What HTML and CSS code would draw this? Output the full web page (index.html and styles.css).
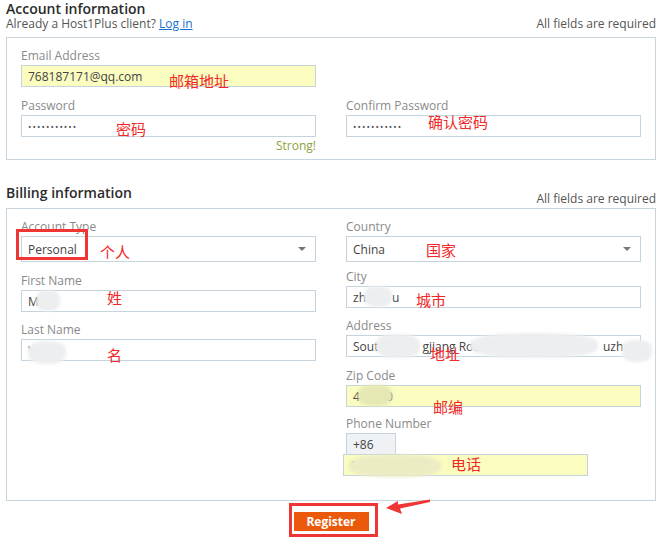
FILE: index.html
```html
<!DOCTYPE html>
<html>
<head>
<meta charset="utf-8">
<link rel="stylesheet" href="styles.css">
</head>
<body>
<div class="page">
  <h2 class="title">Account information</h2>
  <div class="subrow">
    <span>Already a Host1Plus client? <a class="link" href="#">Log in</a></span>
    <span class="req">All fields are required</span>
  </div>
  <div class="box box-account">
    <div class="grid">
      <div class="field">
        <div class="label">Email Address</div>
        <div class="input autofill">768187171@qq.com</div>
      </div>
      <div></div>
      <div class="field gap11">
        <div class="label">Password</div>
        <div class="input dots">•••••••••••</div>
        <div class="strong">Strong!</div>
      </div>
      <div class="field gap11">
        <div class="label">Confirm Password</div>
        <div class="input dots">•••••••••••</div>
      </div>
    </div>
  </div>

  <div class="head-row">
    <h2 class="title title-billing">Billing information</h2>
    <span class="req">All fields are required</span>
  </div>
  <div class="box box-billing">
    <div class="grid">
      <div class="col">
        <div class="field">
          <div class="label">Account Type</div>
          <div class="input select">Personal<span class="caret"></span></div>
        </div>
        <div class="field gap11">
          <div class="label">First Name</div>
          <div class="input">Ma</div>
        </div>
        <div class="field gap10">
          <div class="label">Last Name</div>
          <div class="input">Y</div>
        </div>
      </div>
      <div class="col">
        <div class="field">
          <div class="label">Country</div>
          <div class="input select">China<span class="caret"></span></div>
        </div>
        <div class="field gap7">
          <div class="label">City</div>
          <div class="input">zh<span class="hidden h-city"></span>u</div>
        </div>
        <div class="field gap10">
          <div class="label">Address</div>
          <div class="input">Sout<span class="hidden h-a1"></span>gjiang Roa<span class="hidden h-a2"></span>uzh</div>
        </div>
        <div class="field gap11">
          <div class="label">Zip Code</div>
          <div class="input autofill">4<span class="hidden h-zip"></span>0</div>
        </div>
        <div class="field gap9">
          <div class="label">Phone Number</div>
          <div class="prefix">+86</div>
          <div class="input autofill phone">1</div>
        </div>
      </div>
    </div>
  </div>

  <div class="actions">
    <button class="register">Register</button>
  </div>

  <!-- privacy blur blobs -->
  <div class="blob b1"></div>
  <div class="blob b2"></div>
  <div class="blob b3"></div>
  <div class="blob b4"></div>
  <div class="blob b5"></div>
  <div class="blob b6"></div>
  <div class="blob yb b7"></div>
  <div class="blob yb b8"></div>

  <!-- annotations -->
  <div class="mark mark-type"></div>
  <div class="mark mark-btn"></div>
  <svg class="arrow" width="50" height="20" viewBox="0 0 50 20"><polygon points="2,10 14,3 14,6.5 46,1.5 46,4 16,10.5 18,16" fill="#f03535"/></svg>
  <span class="note n1">邮箱地址</span>
  <span class="note n2">密码</span>
  <span class="note n3">确认密码</span>
  <span class="note n4">个人</span>
  <span class="note n5">姓</span>
  <span class="note n6">名</span>
  <span class="note n7">国家</span>
  <span class="note n8">城市</span>
  <span class="note n9">地址</span>
  <span class="note n10">邮编</span>
  <span class="note n11">电话</span>
</div>
</body>
</html>
```
FILE: styles.css
```css
html, body {
  margin: 0;
  padding: 0;
  background: #fff;
}
.page {
  position: relative;
  width: 659px;
  height: 539px;
  box-sizing: border-box;
  padding: 0 3px 0 6px;
  font-family: "Open Sans", "Noto Sans", sans-serif;
  font-size: 12px;
  color: #555;
  overflow: hidden;
}
.title {
  margin: 0;
  font-size: 14px;
  line-height: 17px;
  font-weight: 600;
  color: #2b2b2b;
}
.subrow {
  display: flex;
  justify-content: space-between;
  line-height: 14px;
  margin-top: 0;
  color: #555;
}
.link {
  color: #1a6fd0;
  text-decoration: underline;
}
.req {
  color: #555;
  line-height: 14px;
}
.box {
  border: 1px solid #c9d5dd;
  box-sizing: border-box;
  width: 650px;
}
.box-account {
  margin-top: 6px;
  padding: 10px 14px 6px;
}
.grid {
  display: grid;
  grid-template-columns: 295px 295px;
  column-gap: 30px;
}
.col {
  display: flex;
  flex-direction: column;
}
.field {
  display: flex;
  flex-direction: column;
}
.gap7 { margin-top: 7px; }
.gap9 { margin-top: 9px; }
.gap10 { margin-top: 10px; }
.gap11 { margin-top: 11px; }
.label {
  line-height: 14px;
  padding-top: 1px;
  margin-bottom: 2px;
  color: #8a8a8a;
}
.input {
  position: relative;
  height: 22px;
  box-sizing: border-box;
  border: 1px solid #c6d3dc;
  background: #fff;
  padding: 0 6px;
  line-height: 21px;
  color: #444;
  white-space: nowrap;
  overflow: hidden;
}
.hidden {
  display: inline-block;
}
.h-city { width: 26px; }
.h-a1 { width: 44px; }
.h-a2 { width: 123px; }
.h-zip { width: 26px; }
.autofill {
  background: #fafcc0;
}
.dots {
  font-size: 9px;
  letter-spacing: 1.1px;
  color: #555;
}
.strong {
  margin-top: 2px;
  line-height: 14px;
  text-align: right;
  color: #8ea13c;
}
.head-row {
  display: flex;
  justify-content: space-between;
  align-items: flex-end;
  margin-top: 24px;
}
.title-billing {
  padding-bottom: 5px;
}
.box-billing {
  margin-top: 2px;
  padding: 10px 14px 24px;
}
.select {
  height: 26px;
  line-height: 25px;
}
.caret {
  position: absolute;
  right: 9px;
  top: 10px;
  width: 0;
  height: 0;
  border-left: 4px solid transparent;
  border-right: 4px solid transparent;
  border-top: 4px solid #777;
}
.prefix {
  width: 50px;
  height: 21px;
  box-sizing: border-box;
  border: 1px solid #c6d3dc;
  border-bottom: none;
  background: #eef2f5;
  padding-left: 6px;
  line-height: 21px;
  color: #444;
}
.phone {
  width: 245px;
  margin-left: -3px;
}
.actions {
  display: flex;
  justify-content: center;
  margin-top: 11px;
}
.register {
  width: 75px;
  height: 19px;
  border: none;
  padding: 0;
  background: #eb5a0c;
  color: #fff;
  font-family: "Open Sans", "Noto Sans", sans-serif;
  font-size: 12px;
  font-weight: 700;
  line-height: 19px;
}
.blob {
  position: absolute;
  background: #eceef0;
  border-radius: 40%;
  filter: blur(1.5px);
}
.yb {
  background: #e6e8b4;
}
.b1 { left: 36px; top: 290px; width: 24px; height: 21px; }
.b2 { left: 28px; top: 341px; width: 38px; height: 23px; }
.b3 { left: 364px; top: 286px; width: 28px; height: 21px; }
.b4 { left: 376px; top: 334px; width: 44px; height: 24px; }
.b5 { left: 470px; top: 333px; width: 128px; height: 25px; }
.b6 { left: 622px; top: 340px; width: 30px; height: 22px; }
.b7 { left: 358px; top: 385px; width: 34px; height: 21px; }
.b8 { left: 349px; top: 455px; width: 92px; height: 22px; background: #ececc4; }
.mark {
  position: absolute;
  border: 3px solid #f03535;
  box-sizing: border-box;
}
.mark-type { left: 16px; top: 229px; width: 72px; height: 31px; }
.mark-btn { left: 289px; top: 503px; width: 89px; height: 34px; }
.arrow {
  position: absolute;
  left: 384px;
  top: 498px;
}
.note {
  position: absolute;
  font-family: "Noto Sans CJK SC", sans-serif;
  font-size: 15px;
  line-height: 17px;
  color: #f02828;
  white-space: nowrap;
}
.n1 { left: 169px; top: 72px; }
.n2 { left: 116px; top: 120px; }
.n3 { left: 428px; top: 113px; }
.n4 { left: 100px; top: 243px; }
.n5 { left: 107px; top: 289px; }
.n6 { left: 107px; top: 346px; }
.n7 { left: 426px; top: 241px; }
.n8 { left: 416px; top: 291px; }
.n9 { left: 430px; top: 345px; }
.n10 { left: 433px; top: 398px; }
.n11 { left: 451px; top: 455px; }
```
